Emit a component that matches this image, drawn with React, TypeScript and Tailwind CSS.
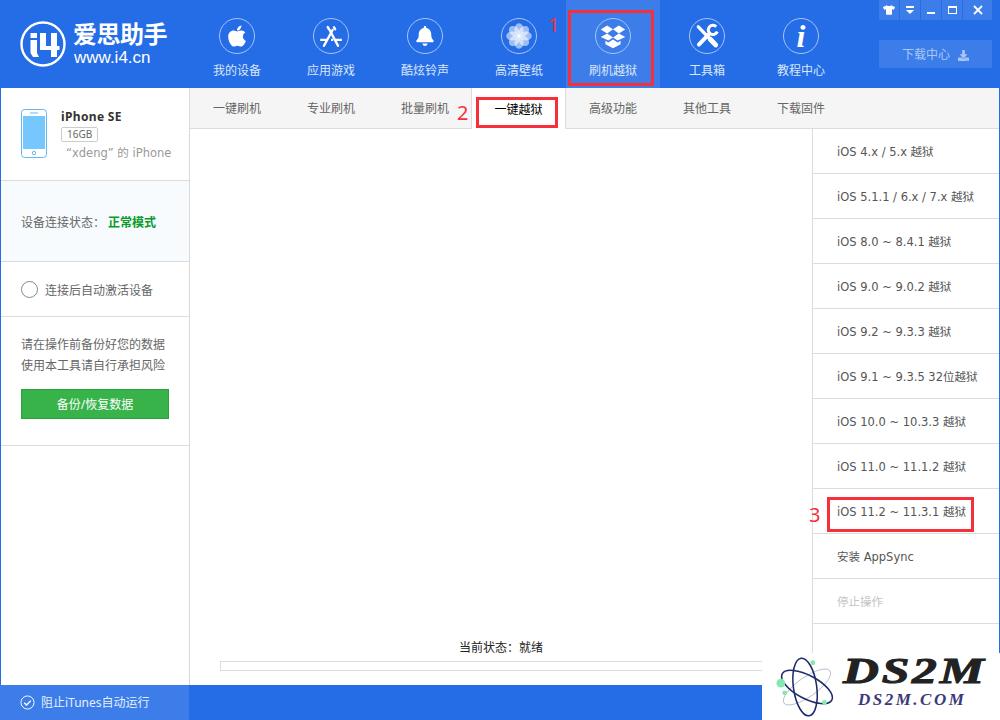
import React from 'react';
import { FaApple, FaBell, FaTshirt, FaDownload } from 'react-icons/fa';

const cjk = "font-['Noto_Sans','Noto_Sans_CJK_SC',sans-serif]";
const wide = "font-['DejaVu_Sans','Noto_Sans_CJK_SC',sans-serif]";

const Flower = () => (
  <svg viewBox="0 0 24 24" className="w-[26px] h-[26px]">
    {[0, 45, 90, 135, 180, 225, 270, 315].map((a) => (
      <ellipse key={a} cx="12" cy="5.8" rx="4.2" ry="5.6" fill="#fff" fillOpacity="0.55" transform={`rotate(${a} 12 12)`} />
    ))}
    <circle cx="12" cy="12" r="1.6" fill="#fff" />
  </svg>
);

const InfoGlyph = () => (
  <span className="font-['Liberation_Serif',serif] italic font-bold text-[32px] leading-none text-white">i</span>
);

const AppGlyph = () => (
  <svg viewBox="0 0 24 24" className="w-[26px] h-[26px]" fill="none" stroke="#fff" strokeWidth="2.2" strokeLinecap="round">
    <path d="M5.5 21L13.5 6.5" />
    <path d="M14.8 4L15.8 5.8" />
    <path d="M10.5 6L18.5 21" />
    <path d="M9 3.8L9.9 5.4" />
    <path d="M2 15.5h7M12 15.5h2M16.5 15.5h5.5" strokeWidth="2" strokeLinecap="butt" />
  </svg>
);

const BoxGlyph = () => (
  <svg viewBox="0 0 24 24" className="w-[28px] h-[28px]" fill="#fff">
    <path d="M1.5 6.5L7 3l5 3.3-5 3.5z" />
    <path d="M22.5 6.5L17 3l-5 3.3 5 3.5z" />
    <path d="M1.5 12.8L7 9.8l5 3.4-4 2.7z" />
    <path d="M22.5 12.8L17 9.8l-5 3.4 4 2.7z" />
    <path d="M5.5 16l2.5 1.5 4-2.6 4 2.6 2.5-1.5v3l-6.5 3.6L5.5 19z" />
  </svg>
);

const ToolsGlyph = () => (
  <svg viewBox="0 0 24 24" className="w-[26px] h-[26px]" fill="none" stroke="#fff" strokeLinecap="round">
    <path d="M4 3.5l10 10.5" strokeWidth="3" />
    <path d="M15 15l5 5.2" strokeWidth="4.6" />
    <path d="M4.5 20l9.5-10" strokeWidth="3.6" />
    <path d="M20.5 3.3A4.3 4.3 0 1 0 21.5 8" strokeWidth="2.8" strokeLinecap="butt" />
  </svg>
);

const navItems = [
  { label: '我的设备', icon: <FaApple size={24} /> },
  { label: '应用游戏', icon: <AppGlyph /> },
  { label: '酷炫铃声', icon: <FaBell size={20} /> },
  { label: '高清壁纸', icon: <Flower /> },
  { label: '刷机越狱', icon: <BoxGlyph />, active: true },
  { label: '工具箱', icon: <ToolsGlyph /> },
  { label: '教程中心', icon: <InfoGlyph /> },
];

const tabs = ['一键刷机', '专业刷机', '批量刷机', '一键越狱', '高级功能', '其他工具', '下载固件'];

const rows = [
  'iOS 4.x / 5.x 越狱',
  'iOS 5.1.1 / 6.x / 7.x 越狱',
  'iOS 8.0 ~ 8.4.1 越狱',
  'iOS 9.0 ~ 9.0.2 越狱',
  'iOS 9.2 ~ 9.3.3 越狱',
  'iOS 9.1 ~ 9.3.5 32位越狱',
  'iOS 10.0 ~ 10.3.3 越狱',
  'iOS 11.0 ~ 11.1.2 越狱',
  'iOS 11.2 ~ 11.3.1 越狱',
  '安装 AppSync',
  '停止操作',
];

const Logo = () => (
  <svg viewBox="0 0 46 46" className="w-[46px] h-[46px] shrink-0">
    <circle cx="23" cy="23" r="21.5" fill="none" stroke="#fff" strokeWidth="2.4" />
    <rect x="10.5" y="12" width="6.5" height="5" fill="#fff" />
    <path d="M10.5 19h6.5v13l2 4h-6l-2.5-4z" fill="#fff" />
    <path d="M20 12h6v13h5V12h6v13h2.5v4H37v7h-6v-7H20z" fill="#fff" />
  </svg>
);

const Watermark = () => (
  <div className="absolute left-[762px] top-[653px] w-[238px] h-[67px] bg-white flex">
    <svg viewBox="0 0 64 64" className="w-[62px] h-[62px] ml-[14px] mt-[3px] shrink-0">
      <ellipse cx="32" cy="32" rx="29" ry="10" fill="none" stroke="#aab2c4" strokeWidth="0.8" transform="rotate(-35 32 32)" />
      <g fill="none" stroke="#1c2a6b" strokeWidth="1.6">
        <ellipse cx="32" cy="32" rx="29" ry="12" transform="rotate(28 32 32)" />
        <ellipse cx="30" cy="32" rx="30" ry="12" transform="rotate(82 30 32)" />
      </g>
      <circle cx="5" cy="28" r="4.5" fill="#86e8b0" />
      <circle cx="38" cy="7" r="2.5" fill="#86e8b0" />
      <circle cx="9" cy="38" r="2.5" fill="#86e8b0" />
      <circle cx="50" cy="48" r="2.5" fill="#86e8b0" />
    </svg>
    <div className="ml-[5px] flex flex-col items-start">
      <span className="font-['Liberation_Serif',serif] italic font-bold text-[36px] leading-[36px] tracking-[2px] text-[#222] origin-left scale-x-[1.38] [-webkit-text-stroke:1px_#222]">DS2M</span>
      <span className="ml-[15px] mt-[2px] font-['Liberation_Serif',serif] italic font-bold text-[17px] leading-[18px] tracking-[2.5px] text-[#3a3a7a]">DS2M.COM</span>
    </div>
  </div>
);

export default function App() {
  return (
    <div className={`${cjk} relative w-[1000px] h-[720px] overflow-hidden flex flex-col bg-white text-[12px]`}>
      <header className="h-[88px] shrink-0 bg-[#256de6] flex">
        <div className="w-[190px] shrink-0 pl-[20px] pt-[21px] flex gap-[7px] text-white">
          <Logo />
          <div className="flex flex-col">
            <span className="font-['Liberation_Sans','Noto_Sans_CJK_SC',sans-serif] font-bold text-[24px] leading-[28px] tracking-[-0.5px]">爱思助手</span>
            <span className="font-['Liberation_Sans',sans-serif] text-[17px] leading-[20px] ml-[1px] -mt-[1px]">www.i4.cn</span>
          </div>
        </div>
        {navItems.map((item) => (
          <div key={item.label} className={`w-[94px] flex flex-col items-center pt-[18px] ${item.active ? 'bg-[#3c7de9]' : ''}`}>
            <div className="w-9 h-9 rounded-full border border-[#a8c5f5] flex items-center justify-center text-white">
              {item.icon}
            </div>
            <span className="mt-[8px] text-[12px] leading-[17px] text-[#dbe7fb]">{item.label}</span>
          </div>
        ))}
        <div className="flex-1 flex flex-col items-end pr-[8px]">
          <div className="flex gap-[1px] h-[20px] text-white">
            <div className="w-[20px] bg-[#3c7de9] flex items-center justify-center"><FaTshirt size={12} /></div>
            <div className="w-[20px] bg-[#3c7de9] flex flex-col items-center justify-center gap-[2px]">
              <span className="w-[8px] h-[2px] bg-white" />
              <span className="w-0 h-0 border-x-[4px] border-x-transparent border-t-[4px] border-t-white" />
            </div>
            <div className="w-[20px] bg-[#3c7de9] flex items-end justify-center pb-[6px]"><span className="w-[8px] h-[2px] bg-white" /></div>
            <div className="w-[20px] bg-[#3c7de9] flex items-center justify-center"><span className="w-[9px] h-[8px] border border-white border-t-2" /></div>
            <div className="w-[29px] bg-[#3c7de9] flex items-center justify-center">
              <svg viewBox="0 0 10 10" className="w-[10px] h-[10px]"><path d="M1 1l8 8M9 1l-8 8" stroke="#fff" strokeWidth="1.8" /></svg>
            </div>
          </div>
          <div className="mt-[20px] w-[113px] h-[28px] bg-[#3c7de9] flex items-center justify-center gap-[8px] text-[#a9c7f5] pt-[2px]">
            <span>下载中心</span>
            <FaDownload size={11} />
          </div>
        </div>
      </header>

      <div className="flex-1 flex min-h-0 border-x border-[#256de6]">
        <aside className="w-[188px] shrink-0 border-r border-[#d9d9d9] box-content flex flex-col">
          <div className="h-[93px] border-b border-[#dcdcdc] flex pl-[20px] pt-[21px]">
            <svg viewBox="0 0 26 49" className="w-[26px] h-[49px] shrink-0">
              <rect x="0.5" y="0.5" width="25" height="48" rx="3" fill="#fff" stroke="#66b8f5" />
              <rect x="2" y="7" width="22" height="33" fill="#77c7ff" />
              <path d="M9 4h8" stroke="#66b8f5" />
              <circle cx="13" cy="44" r="1.7" fill="none" stroke="#66b8f5" />
            </svg>
            <div className="ml-[14px] -mt-[1px] flex flex-col items-start">
              <span className="font-bold text-[12px] leading-[17px] tracking-[0.35px] text-[#333]">iPhone SE</span>
              <span className="mt-[2px] h-[15px] px-[5px] border border-[#ccc] rounded-[2px] text-[10px] leading-[13px] text-[#666]">16GB</span>
              <span className={`${wide} mt-[3px] ml-[5px] text-[11.5px] leading-[17px] text-[#999] whitespace-nowrap`}>“xdeng” 的 iPhone</span>
            </div>
          </div>
          <div className="h-[81px] bg-[#f7fbfe] border-b border-[#dcdcdc] flex items-center pl-[20px] pt-[4px] text-[#666]">
            设备连接状态：
            <span className="ml-[3px] font-bold text-[#0a9a2c]">正常模式</span>
          </div>
          <div className="h-[55px] border-b border-[#dcdcdc] flex items-center pl-[20px] gap-[7px] text-[#666]">
            <span className="w-[17px] h-[17px] rounded-full border border-[#888]" />
            <span className="pt-[3px]">连接后自动激活设备</span>
          </div>
          <div className="h-[129px] border-b border-[#dcdcdc] pl-[20px] pt-[18px] text-[#666]">
            <p className="leading-[20px]">请在操作前备份好您的数据</p>
            <p className="leading-[20px] mt-[1px]">使用本工具请自行承担风险</p>
            <button className="mt-[13px] w-[148px] h-[30px] bg-[#37b34a] border border-[#2ca23f] text-white text-[12px] pt-[2px]">备份/恢复数据</button>
          </div>
        </aside>

        <div className="flex-1 min-w-0 flex flex-col">
          <nav className="h-[41px] shrink-0 bg-[#f5f5f5] border-b border-[#dcdcdc] flex">
            {tabs.map((t, i) => (
              <div
                key={t}
                className={
                  i === 3
                    ? 'w-[95px] h-[41px] -ml-[1px] pt-[2px] bg-white border-x border-[#dcdcdc] text-black flex items-center justify-center'
                    : 'w-[94px] pt-[2px] text-[#666] flex items-center justify-center'
                }
              >
                {t}
              </div>
            ))}
          </nav>
          <div className="flex-1 flex min-h-0">
            <div className="flex-1 min-w-0" />
            <div className="w-[187px] shrink-0 border-l border-[#dcdcdc] flex flex-col">
              {rows.map((r, i) => (
                <div key={r} className={`${wide} text-[11.5px] h-[45px] shrink-0 border-b border-[#dcdcdc] pl-[24px] pt-[3px] flex items-center ${i === 10 ? 'text-[#c4c4c4]' : 'text-[#555]'}`}>
                  {r}
                </div>
              ))}
            </div>
          </div>
          <div className="h-[61px] shrink-0 flex">
            <div className="flex-1 min-w-0 flex flex-col items-center pt-[15px]">
              <span className="leading-[17px] text-[#222]">当前状态：就绪</span>
              <div className="mt-[5px] ml-[30px] mr-[30px] self-stretch h-[10px] border border-[#dcdcdc]" />
            </div>
            <div className="w-[187px] shrink-0 border-l border-[#dcdcdc]" />
          </div>
        </div>
      </div>

      <footer className="h-[35px] shrink-0 bg-[#256de6] flex">
        <div className="w-[189px] bg-[#3c7de9] flex items-center pl-[20px] gap-[6px] text-[#e6effd]">
          <svg viewBox="0 0 16 16" className="w-[15px] h-[15px]">
            <circle cx="8" cy="8" r="7" fill="none" stroke="#fff" />
            <path d="M4.5 8.2l2.5 2.5 4.5-4.7" fill="none" stroke="#fff" strokeWidth="1.5" />
          </svg>
          <span className="pt-[1px]">阻止iTunes自动运行</span>
        </div>
      </footer>

      {/* 红色标注 */}
      <div className="absolute left-[568px] top-[10px] w-[86px] h-[76px] border-[3px] border-[#f5303a]" />
      <div className="absolute left-[476px] top-[97px] w-[82px] h-[31px] border-[3px] border-[#f5303a]" />
      <div className="absolute left-[827px] top-[497px] w-[147px] h-[35px] border-[3px] border-[#f5303a]" />
      <span className="absolute left-[548px] top-[11px] text-[20px] leading-[28px] text-[#f5303a]">1</span>
      <span className="absolute left-[457px] top-[99px] text-[20px] leading-[28px] text-[#f5303a]">2</span>
      <span className="absolute left-[809px] top-[501px] text-[20px] leading-[28px] text-[#f5303a]">3</span>

      <Watermark />
    </div>
  );
}
